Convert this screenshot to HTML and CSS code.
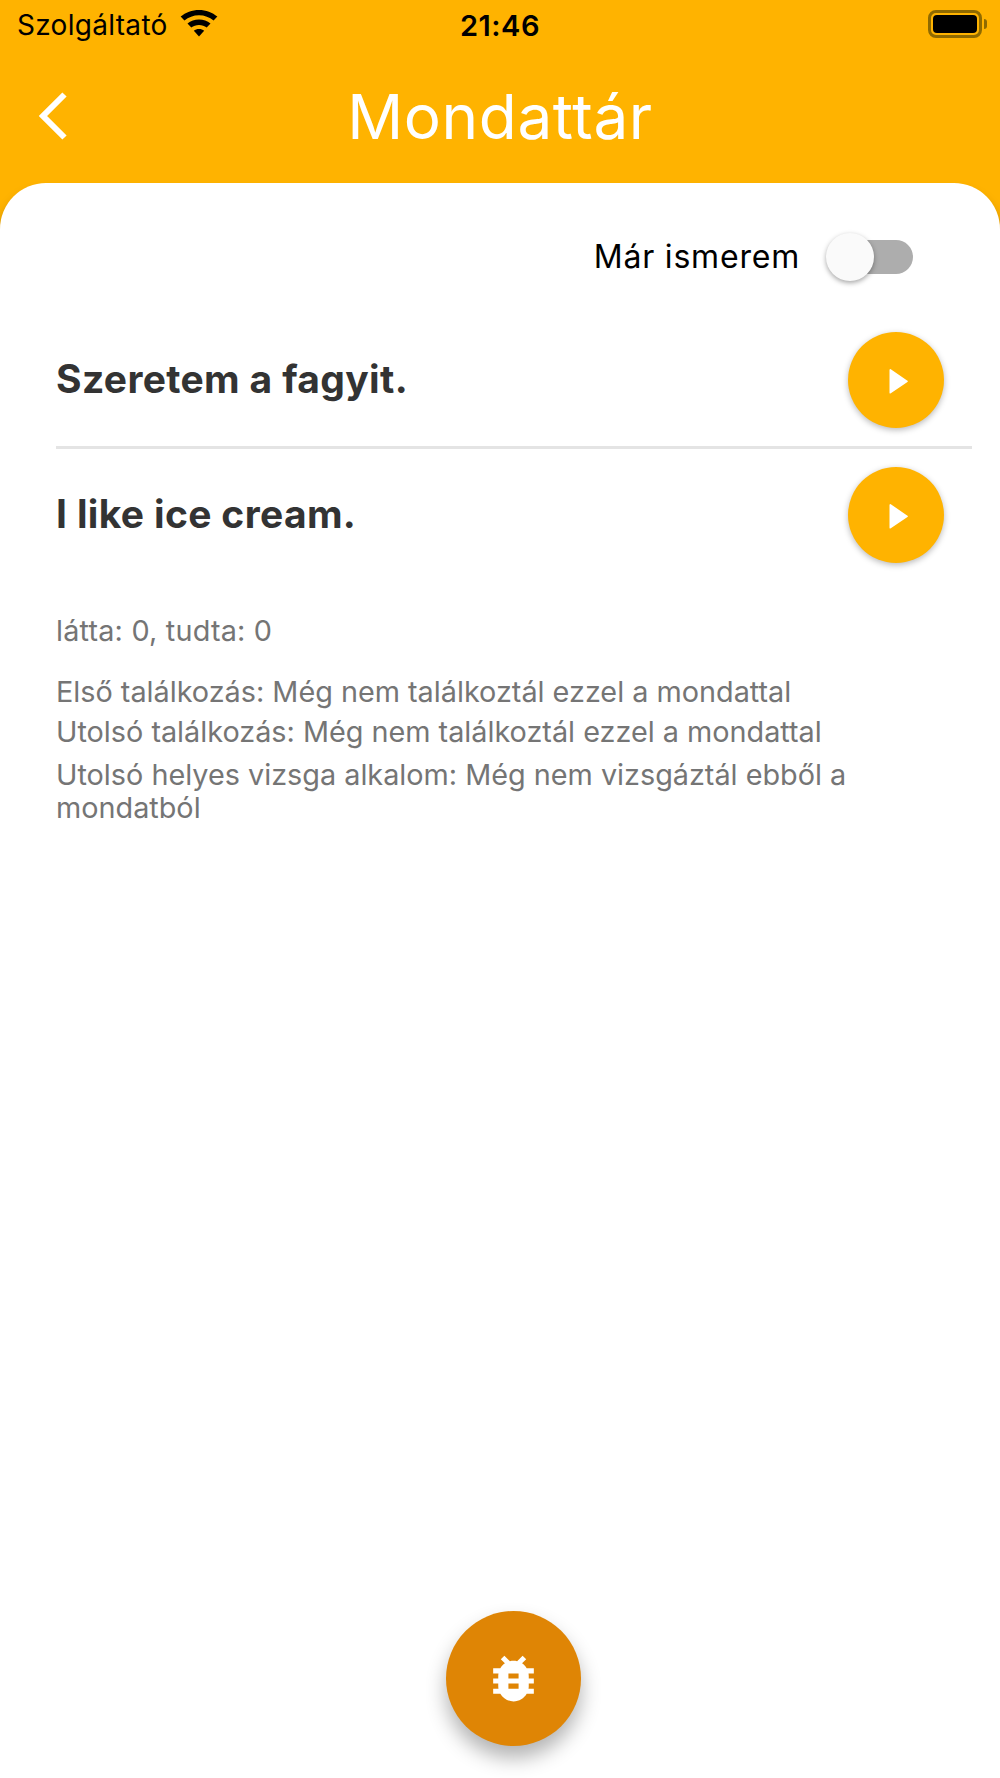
FILE: index.html
```html
<!DOCTYPE html>
<html lang="hu">
<head>
<meta charset="utf-8">
<title>Mondattár</title>
<link rel="stylesheet" href="styles.css">
</head>
<body>
<div class="page">
  <header class="top">
    <div class="status">
      <div class="carrier">
        <span class="carrier-name">Szolgáltató</span>
        <svg class="wifi" viewBox="0 0 36 27" preserveAspectRatio="none" aria-hidden="true">
          <path d="M18 0C11.4 0 5.3 2.5.6 6.6l3.6 4C8 7.300 12.800 5.300 18 5.300s10 2 13.800 5.300l3.600-4C30.700 2.500 24.600 0 18 0z"/>
          <path d="M18 9.600c-4.100 0-7.900 1.500-10.900 4l3.600 4c2-1.600 4.500-2.600 7.300-2.600s5.300 1 7.300 2.600l3.600-4c-3-2.500-6.800-4-10.900-4z"/>
          <path d="M18 19c-1.900 0-3.600.6-4.900 1.700L18 26.500l4.900-5.800C21.600 19.600 19.900 19 18 19z"/>
        </svg>
      </div>
      <span class="clock">21:46</span>
      <div class="battery"><span class="battery-fill"></span><span class="battery-nub"></span></div>
    </div>
    <div class="nav">
      <svg class="back" viewBox="0 0 30 48" aria-hidden="true"><path d="M26.500 2.500 5 24l21.500 21.500"/></svg>
      <h1 class="title">Mondattár</h1>
    </div>
  </header>

  <main class="sheet">
    <div class="known">
      <span class="known-label">Már ismerem</span>
      <div class="switch"><span class="switch-thumb"></span></div>
    </div>

    <div class="phrase phrase-first">
      <span class="phrase-text">Szeretem a fagyit.</span>
      <button class="play" type="button" aria-label="Lejátszás">
        <svg viewBox="0 0 24 24"><path d="M8.600 6v13.600l10-6.800z"/></svg>
      </button>
    </div>
    <div class="phrase">
      <span class="phrase-text">I like ice cream.</span>
      <button class="play" type="button" aria-label="Lejátszás">
        <svg viewBox="0 0 24 24"><path d="M8.600 6v13.600l10-6.800z"/></svg>
      </button>
    </div>

    <p class="counts">látta: 0, tudta: 0</p>
    <div class="details">
      <p class="detail">Első találkozás: Még nem találkoztál ezzel a mondattal</p>
      <p class="detail detail-gap">Utolsó találkozás: Még nem találkoztál ezzel a mondattal</p>
      <p class="detail">Utolsó helyes vizsga alkalom: Még nem vizsgáztál ebből a mondatból</p>
    </div>
  </main>

  <button class="fab" type="button" aria-label="Hibajelentés">
    <svg viewBox="0 0 24 24"><path d="M20 8h-2.810c-.45-.78-1.070-1.450-1.820-1.960L17 4.410 15.590 3l-2.170 2.170C12.960 5.060 12.490 5 12 5c-.49 0-.96.06-1.410.17L8.410 3 7 4.410l1.620 1.630C7.880 6.550 7.260 7.220 6.810 8H4v2h2.090c-.05.33-.09.66-.09 1v1H4v2h2v1c0 .34.04.67.09 1H4v2h2.810c1.040 1.790 2.970 3 5.190 3s4.150-1.210 5.190-3H20v-2h-2.090c.05-.33.09-.66.09-1v-1h2v-2h-2v-1c0-.34-.04-.67-.09-1H20V8zm-6 8h-4v-2h4v2zm0-4h-4v-2h4v2z"/></svg>
  </button>
</div>
</body>
</html>
```
FILE: styles.css
```css
* { box-sizing: border-box; }
html, body { margin: 0; padding: 0; }
body {
  width: 1000px;
  height: 1778px;
  overflow: hidden;
  background: #ffb300;
  font-family: Inter, "Liberation Sans", sans-serif;
}
.page {
  position: relative;
  width: 1000px;
  height: 1778px;
  display: flex;
  flex-direction: column;
}
.top { height: 183px; background: #ffb300; flex: none; }
.status {
  position: relative;
  height: 50px;
  display: flex;
  align-items: center;
  justify-content: space-between;
  padding: 0 18px 0 17px;
  color: #000;
}
.carrier { display: flex; align-items: center; gap: 12px; }
.carrier-name { font-size: 28px; line-height: 50px; letter-spacing: .3px; }
.wifi { width: 38px; height: 27px; fill: #000; margin-top: -3px; }
.clock {
  position: absolute;
  left: 0;
  right: 0;
  top: 1px;
  text-align: center;
  font-size: 29px;
  font-weight: 600;
  line-height: 50px;
  letter-spacing: .5px;
}
.battery {
  position: relative;
  width: 54px;
  height: 28px;
  margin-top: -2px;
  border: 3px solid #8f6a00;
  border-radius: 8px;
  padding: 2px;
}
.battery-fill { display: block; height: 100%; background: #000; border-radius: 4px; }
.battery-nub {
  position: absolute;
  right: -8px;
  top: 6px;
  width: 3px;
  height: 10px;
  background: #8f6a00;
  border-radius: 0 4px 4px 0;
}
.nav {
  position: relative;
  height: 133px;
  display: flex;
  align-items: flex-start;
  justify-content: center;
}
.back {
  position: absolute;
  left: 38px;
  top: 42px;
  width: 30px;
  height: 48px;
  fill: none;
  stroke: #fff;
  stroke-width: 6;
}
.title {
  margin: 34px 0 0;
  color: #fff;
  font-size: 62px;
  font-weight: 400;
  line-height: 66px;
  letter-spacing: .6px;
}
.sheet {
  flex: 1;
  background: #fff;
  border-radius: 46px 46px 0 0;
  box-shadow: 0 10px 12px rgba(0, 0, 0, .35);
  padding: 0 28px 0 56px;
}
.known {
  display: flex;
  align-items: center;
  justify-content: flex-end;
  height: 48px;
  margin-top: 50px;
  padding-right: 59px;
  gap: 30px;
}
.known-label { font-size: 32px; color: #000; line-height: 48px; letter-spacing: .8px; }
.switch {
  position: relative;
  width: 83px;
  height: 34px;
  background: #adadad;
  border-radius: 17px;
}
.switch-thumb {
  position: absolute;
  left: -4px;
  top: -7px;
  width: 48px;
  height: 48px;
  border-radius: 50%;
  background: #fafafa;
  box-shadow: 0 2px 5px rgba(0, 0, 0, .35);
}
.phrase {
  display: flex;
  align-items: center;
  justify-content: space-between;
  height: 132px;
  padding-right: 28px;
}
.phrase-first {
  margin-top: 33px;
  border-bottom: 3px solid #e4e4e4;
  height: 135px;
}
.phrase-text {
  font-size: 39px;
  font-weight: 700;
  color: #333;
  letter-spacing: .35px;
  line-height: 46px;
  margin-top: -3px;
}
.play {
  width: 96px;
  height: 96px;
  padding: 28px;
  border: 0;
  border-radius: 50%;
  background: #ffb300;
  box-shadow: 0 2px 6px rgba(0, 0, 0, .28);
}
.play svg { display: block; width: 40px; height: 40px; fill: #fff; stroke: #fff; stroke-width: 1; stroke-linejoin: round; }
.counts {
  margin: 30px 0 0;
  font-size: 28.800px;
  line-height: 40px;
  letter-spacing: .2px;
  color: #757575;
}
.details { margin-top: 24px; color: #757575; font-size: 28.800px; line-height: 33px; }
.detail { margin: 0 0 7px; }
.detail-gap { margin-bottom: 10px; }
.fab {
  position: absolute;
  left: 446px;
  top: 1611px;
  width: 135px;
  height: 135px;
  padding: 37px;
  border: 0;
  border-radius: 50%;
  background: #df8505;
  box-shadow: 0 12px 20px rgba(0, 0, 0, .3);
}
.fab svg { display: block; width: 61px; height: 61px; fill: #fff; }
```
